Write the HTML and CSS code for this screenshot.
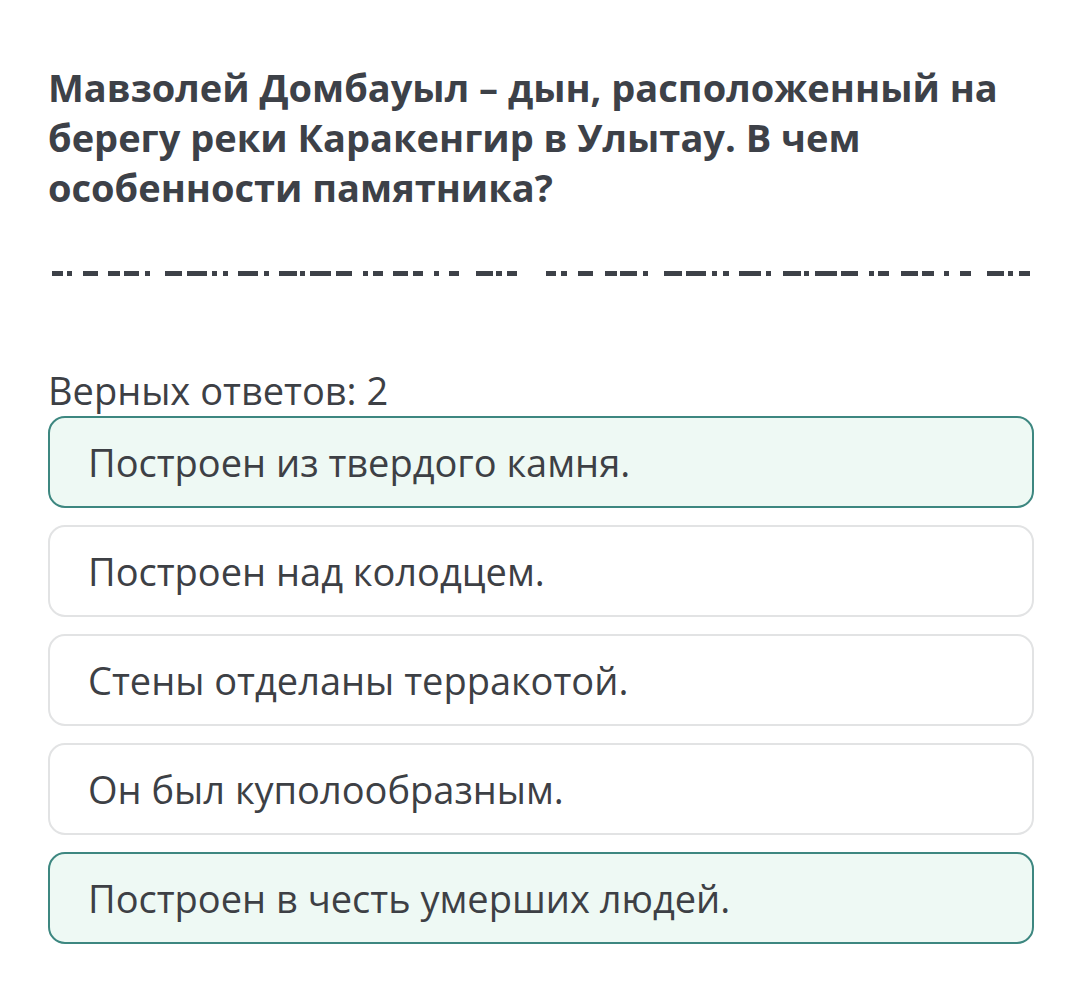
FILE: index.html
```html
<!DOCTYPE html>
<html lang="ru">
<head>
<meta charset="utf-8">
<title>Вопрос</title>
<link rel="stylesheet" href="styles.css">
</head>
<body>
<main class="page">
  <h1 class="question">Мавзолей Домбауыл – дын, расположенный на берегу реки Каракенгир в Улытау. В чем особенности памятника?</h1>
  <svg class="blank" width="986" height="5" viewBox="48 0 986 5" aria-hidden="true">
    <g fill="#3d4148">
      <rect x="52" y="0" width="11" height="5"/><rect x="67" y="0" width="5" height="5"/><rect x="83" y="0" width="15" height="5"/><rect x="108" y="0" width="12" height="5"/><rect x="124" y="0" width="15" height="5"/><rect x="145" y="0" width="5" height="5"/><rect x="165" y="0" width="17" height="5"/><rect x="187" y="0" width="20" height="5"/><rect x="212" y="0" width="5" height="5"/><rect x="223" y="0" width="5" height="5"/><rect x="238" y="0" width="20" height="5"/><rect x="264" y="0" width="5" height="5"/><rect x="279" y="0" width="18" height="5"/><rect x="300" y="0" width="5" height="5"/><rect x="310" y="0" width="21" height="5"/><rect x="336" y="0" width="16" height="5"/><rect x="363" y="0" width="5" height="5"/><rect x="373" y="0" width="10" height="5"/><rect x="393" y="0" width="15" height="5"/><rect x="413" y="0" width="10" height="5"/><rect x="434" y="0" width="5" height="5"/><rect x="449" y="0" width="10" height="5"/><rect x="476" y="0" width="17" height="5"/><rect x="496" y="0" width="6" height="5"/><rect x="507" y="0" width="10" height="5"/>
      <rect x="546" y="0" width="10" height="5"/><rect x="561" y="0" width="6" height="5"/><rect x="578" y="0" width="15" height="5"/><rect x="605" y="0" width="12" height="5"/><rect x="620" y="0" width="17" height="5"/><rect x="643" y="0" width="5" height="5"/><rect x="664" y="0" width="18" height="5"/><rect x="686" y="0" width="20" height="5"/><rect x="712" y="0" width="5" height="5"/><rect x="723" y="0" width="6" height="5"/><rect x="739" y="0" width="22" height="5"/><rect x="766" y="0" width="5" height="5"/><rect x="783" y="0" width="18" height="5"/><rect x="804" y="0" width="5" height="5"/><rect x="815" y="0" width="22" height="5"/><rect x="841" y="0" width="17" height="5"/><rect x="869" y="0" width="5" height="5"/><rect x="878" y="0" width="11" height="5"/><rect x="901" y="0" width="17" height="5"/><rect x="922" y="0" width="12" height="5"/><rect x="944" y="0" width="5" height="5"/><rect x="960" y="0" width="11" height="5"/><rect x="987" y="0" width="17" height="5"/><rect x="1008" y="0" width="5" height="5"/><rect x="1019" y="0" width="11" height="5"/>
    </g>
  </svg>
  <p class="count">Верных ответов: 2</p>
  <ul class="options">
    <li class="option selected">Построен из твердого камня.</li>
    <li class="option">Построен над колодцем.</li>
    <li class="option">Стены отделаны терракотой.</li>
    <li class="option">Он был куполообразным.</li>
    <li class="option selected">Построен в честь умерших людей.</li>
  </ul>
</main>
</body>
</html>
```

FILE: styles.css
```css
html, body {
  margin: 0;
  padding: 0;
  background: #ffffff;
}

body {
  font-family: "Open Sans", "Noto Sans", sans-serif;
  color: #3d4045;
}

.page {
  display: flex;
  flex-direction: column;
  padding: 62px 46px 0 48px;
}

.question {
  margin: 0;
  font-size: 38px;
  font-weight: 700;
  line-height: 50px;
  color: #3d4148;
  max-width: 986px;
}

.blank {
  display: block;
  margin-top: 59px;
}

.count {
  margin: 92px 0 0;
  font-size: 38px;
  font-weight: 400;
  line-height: 44px;
  color: #3d4045;
}

.options {
  list-style: none;
  margin: 4px 0 0;
  padding: 0;
  display: flex;
  flex-direction: column;
  gap: 17px;
}

.option {
  box-sizing: border-box;
  height: 92px;
  display: flex;
  align-items: center;
  padding: 0 38px;
  border: 2px solid #e2e3e4;
  border-radius: 17px;
  background: #ffffff;
  font-size: 38px;
  line-height: 50px;
  color: #3d4045;
}

.option.selected {
  border-color: #3d8780;
  background: #eef9f4;
}
```
